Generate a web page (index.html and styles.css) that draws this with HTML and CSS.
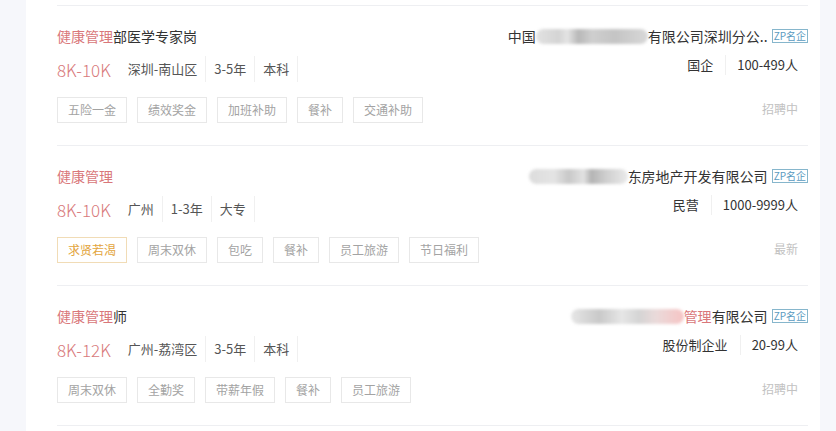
FILE: index.html
```html
<!DOCTYPE html>
<html>
<head>
    <meta charset="UTF-8">
    <title>职位列表</title>
    <link rel="stylesheet" href="styles.css">
</head>
<body>
<div class="page">
    <div class="side"></div>
    <div class="panel">
        <ul class="job-list">
            <li class="job">
                <div class="job-main">
                    <div class="job-title"><em>健康管理</em>部医学专家岗</div>
                    <div class="job-meta">
                        <span class="salary">8K-10K</span>
                        <span class="meta-item">深圳-南山区</span>
                        <span class="meta-item">3-5年</span>
                        <span class="meta-item">本科</span>
                    </div>
                    <div class="tags">
                        <span class="tag">五险一金</span>
                        <span class="tag">绩效奖金</span>
                        <span class="tag">加班补助</span>
                        <span class="tag">餐补</span>
                        <span class="tag">交通补助</span>
                    </div>
                </div>
                <div class="job-company">
                    <div class="company-name">中国<span class="blur b1"></span>有限公司深圳分公..<span class="zp">ZP名企</span></div>
                    <div class="company-info">
                        <span class="info-item">国企</span>
                        <span class="info-item">100-499人</span>
                    </div>
                    <div class="status">招聘中</div>
                </div>
            </li>
            <li class="job">
                <div class="job-main">
                    <div class="job-title"><em>健康管理</em></div>
                    <div class="job-meta">
                        <span class="salary">8K-10K</span>
                        <span class="meta-item">广州</span>
                        <span class="meta-item">1-3年</span>
                        <span class="meta-item">大专</span>
                    </div>
                    <div class="tags">
                        <span class="tag tag-hot">求贤若渴</span>
                        <span class="tag">周末双休</span>
                        <span class="tag">包吃</span>
                        <span class="tag">餐补</span>
                        <span class="tag">员工旅游</span>
                        <span class="tag">节日福利</span>
                    </div>
                </div>
                <div class="job-company">
                    <div class="company-name"><span class="blur b2"></span>东房地产开发有限公司<span class="zp">ZP名企</span></div>
                    <div class="company-info">
                        <span class="info-item">民营</span>
                        <span class="info-item">1000-9999人</span>
                    </div>
                    <div class="status">最新</div>
                </div>
            </li>
            <li class="job">
                <div class="job-main">
                    <div class="job-title"><em>健康管理</em>师</div>
                    <div class="job-meta">
                        <span class="salary">8K-12K</span>
                        <span class="meta-item">广州-荔湾区</span>
                        <span class="meta-item">3-5年</span>
                        <span class="meta-item">本科</span>
                    </div>
                    <div class="tags">
                        <span class="tag">周末双休</span>
                        <span class="tag">全勤奖</span>
                        <span class="tag">带薪年假</span>
                        <span class="tag">餐补</span>
                        <span class="tag">员工旅游</span>
                    </div>
                </div>
                <div class="job-company">
                    <div class="company-name"><span class="blur b3"></span><em>管理</em>有限公司<span class="zp">ZP名企</span></div>
                    <div class="company-info">
                        <span class="info-item">股份制企业</span>
                        <span class="info-item">20-99人</span>
                    </div>
                    <div class="status">招聘中</div>
                </div>
            </li>
            <li class="job job-last"></li>
        </ul>
    </div>
    <div class="side"></div>
</div>
</body>
</html>
```

FILE: styles.css
```css
*{
    padding: 0;
    margin: 0;
}
body{
    font-family: "Microsoft YaHei", "Noto Sans CJK SC", sans-serif;
    color: #333;
    background-color: #f6f7fb;
}
.page{
    display: flex;
    height: 431px;
    overflow: hidden;
}
.side{
    width: 26px;
    flex-shrink: 0;
    background-color: #f6f7fb;
}
.side:last-child{
    width: 16px;
}
.panel{
    flex: 1;
    background-color: #fff;
    padding: 5px 12px 0 31px;
}
.job-list{
    list-style: none;
}
/* 每一条职位：左边职位信息，右边公司信息 */
.job{
    display: flex;
    justify-content: space-between;
    height: 139px;
    border-top: 1px solid #eeeff2;
}
.job-last{
    height: 20px;
}
.job-main{
    padding-top: 20px;
}
.job-title{
    font-size: 14px;
    line-height: 20px;
    height: 20px;
    color: #333;
}
em{
    font-style: normal;
    color: #d9777a;
}
.job-meta{
    display: flex;
    align-items: center;
    margin-top: 10px;
    height: 26px;
}
.salary{
    font-size: 17px;
    font-weight: 300;
    color: #d8797b;
    margin-right: 17px;
}
.meta-item{
    font-size: 13px;
    color: #555;
    line-height: 26px;
    padding: 0 8px;
    border-left: 1px solid #f0f0f0;
}
.meta-item:nth-child(2){
    border-left: none;
    padding-left: 0;
}
.meta-item:last-child{
    border-right: 1px solid #f0f0f0;
}
.tags{
    display: flex;
    margin-top: 15px;
}
.tag{
    font-size: 12px;
    line-height: 24px;
    padding: 0 10px;
    margin-right: 10px;
    color: #a3a3a3;
    border: 1px solid #e8e8e8;
}
.tag-hot{
    color: #e3a53d;
    border-color: #f1dcb6;
}
.job-company{
    display: flex;
    flex-direction: column;
    align-items: flex-end;
    padding-top: 20px;
}
.company-name{
    display: flex;
    align-items: center;
    font-size: 14px;
    line-height: 20px;
    height: 20px;
}
.blur{
    display: inline-block;
    height: 15px;
    border-radius: 8px;
    filter: blur(1.5px);
}
.b1{
    width: 112px;
    background: linear-gradient(90deg, #e2e2e2 0, #d4d4d4 20%, #e4e4e4 28%, #b8b8b8 38%, #cfcfcf 50%, #c4c4c4 70%, #d8d8d8 100%);
}
.b2{
    width: 99px;
    background: linear-gradient(90deg, #dcdcdc 0, #e4e4e4 25%, #c8c8c8 40%, #e2e2e2 55%, #b4b4b4 63%, #cfcfcf 78%, #eaeaea 100%);
}
.b3{
    width: 113px;
    background: linear-gradient(90deg, #e6e6e6 0, #c9c9c9 25%, #e6e6e6 45%, #d4d4d4 60%, #eadada 75%, #f6c4c4 100%);
}
.zp{
    font-size: 10px;
    line-height: 12px;
    color: #5b9bbf;
    border: 1px solid #86b6cc;
    padding: 0 1px;
    margin-left: 4px;
}
.company-info{
    display: flex;
    align-items: center;
    margin-top: 7px;
    margin-right: 10px;
    height: 24px;
}
.info-item{
    font-size: 13px;
    color: #333;
    line-height: 20px;
}
.info-item + .info-item{
    margin-left: 12px;
    padding-left: 11px;
    border-left: 1px solid #f0f0f0;
}
.status{
    font-size: 12px;
    color: #c2c2c2;
    margin-top: 23px;
    margin-right: 10px;
}
```
